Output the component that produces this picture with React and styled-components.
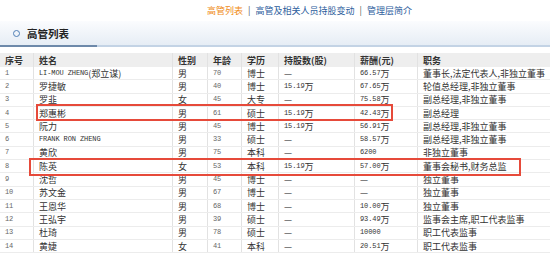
import React from "react";
import styled, { createGlobalStyle } from "styled-components";

const Global = createGlobalStyle`
  html, body { margin: 0; padding: 0; background: #fff; }
  body { font-family: "Noto Sans CJK SC", "Liberation Sans", sans-serif; }
`;

const Page = styled.div`
  width: 550px;
  height: 256px;
  overflow: hidden;
  background: #fff;
`;

const Nav = styled.div`
  height: 21px;
  display: flex;
  align-items: center;
  padding-left: 207px;
  gap: 5px;
  font-size: 9px;
  line-height: 1;
`;

const NavLink = styled.span`
  color: ${(p) => (p.$active ? "#ef8a14" : "#2c5d9c")};
`;

const NavSep = styled.span`
  color: #555;
  font-size: 9px;
`;

const TitleBar = styled.div`
  height: 24px;
  display: flex;
  align-items: center;
  gap: 7px;
  padding-left: 13px;
  background: linear-gradient(#fbfcfe, #e6edf5);
  position: relative;
  border-bottom: 2px solid #c3d3e5;
`;

const TitleAccent = styled.div`
  position: absolute;
  left: 0;
  bottom: -2px;
  width: 97px;
  height: 2px;
  background: #6d89aa;
`;

const Ring = styled.span`
  width: 5px;
  height: 5px;
  border: 1.5px solid #4f7fb6;
  border-radius: 50%;
`;

const Title = styled.span`
  font-size: 10.5px;
  font-weight: 700;
  color: #222;
`;

const TableWrap = styled.div`
  position: relative;
  margin-top: 6px;
`;

const COLS = "33px 139px 35px 34px 37px 76px 63px 133px";

const Row = styled.div`
  display: grid;
  grid-template-columns: ${COLS};
  height: ${(p) => (p.$head ? "14px" : "13.3px")};
  box-sizing: border-box;
  background: ${(p) => (p.$head ? "#eeeeee" : "#fff")};
  border-bottom: ${(p) => (p.$head ? "none" : "1px solid #ececec")};
`;

const Cell = styled.div`
  display: flex;
  align-items: center;
  padding-left: 5px;
  overflow: hidden;
  white-space: nowrap;
  font-size: 9px;
  line-height: 1;
  font-weight: ${(p) => (p.$head ? 700 : 400)};
  color: ${(p) => (p.$muted ? "#666" : "#333")};
  border-left: 1px solid #e2e2e2;
  &:first-child { border-left: none; }
`;

const Latin = styled.span`
  font-family: "Liberation Mono", monospace;
  font-size: 7px;
  letter-spacing: -0.1px;
`;

const Mark = styled.div`
  position: absolute;
  border: 2px solid #e64a3a;
  box-sizing: border-box;
`;

const heads = ["序号", "姓名", "性别", "年龄", "学历", "持股数(股)", "薪酬(元)", "职务"];

const rows = [
  ["1", "LI-MOU ZHENG(郑立谋)", "男", "70", "博士", "—", "66.57万", "董事长,法定代表人,非独立董事"],
  ["2", "罗捷敏", "男", "40", "博士", "15.19万", "67.65万", "轮值总经理,非独立董事"],
  ["3", "罗韭", "女", "45", "大专", "—", "75.58万", "副总经理,非独立董事"],
  ["4", "郑惠彬", "男", "61", "硕士", "15.19万", "42.43万", "副总经理"],
  ["5", "阮力", "男", "45", "博士", "15.19万", "56.91万", "副总经理,非独立董事"],
  ["6", "FRANK RON ZHENG", "男", "33", "硕士", "—", "58.57万", "副总经理,非独立董事"],
  ["7", "黄欣", "男", "75", "本科", "—", "6200", "非独立董事"],
  ["8", "陈英", "女", "53", "本科", "15.19万", "57.00万", "董事会秘书,财务总监"],
  ["9", "沈哲", "男", "45", "博士", "—", "—", "独立董事"],
  ["10", "苏文金", "男", "67", "博士", "—", "—", "独立董事"],
  ["11", "王恩华", "男", "68", "博士", "—", "10.00万", "独立董事"],
  ["12", "王弘宇", "男", "39", "硕士", "—", "93.49万", "监事会主席,职工代表监事"],
  ["13", "杜琦", "男", "78", "硕士", "—", "10000", "职工代表监事"],
  ["14", "黄婕", "女", "41", "本科", "—", "20.51万", "职工代表监事"],
];

const mixed = (text) =>
  text.split(/([A-Za-z0-9.\- ]+)/).map((p, i) =>
    /^[A-Za-z0-9.\- ]+$/.test(p) ? (
      <Latin key={i}>{p}</Latin>
    ) : (
      <React.Fragment key={i}>{p}</React.Fragment>
    )
  );

export default function App() {
  return (
    <Page>
      <Global />
      <Nav>
        <NavLink $active>高管列表</NavLink>
        <NavSep>|</NavSep>
        <NavLink>高管及相关人员持股变动</NavLink>
        <NavSep>|</NavSep>
        <NavLink>管理层简介</NavLink>
      </Nav>
      <TitleBar>
        <Ring />
        <Title>高管列表</Title>
        <TitleAccent />
      </TitleBar>
      <TableWrap>
        <Row $head>
          {heads.map((h) => (
            <Cell $head key={h}>{h}</Cell>
          ))}
        </Row>
        {rows.map((r) => (
          <Row key={r[0]}>
            <Cell $muted>{mixed(r[0])}</Cell>
            <Cell>{mixed(r[1])}</Cell>
            <Cell>{r[2]}</Cell>
            <Cell $muted>{mixed(r[3])}</Cell>
            <Cell>{r[4]}</Cell>
            <Cell>{mixed(r[5])}</Cell>
            <Cell>{mixed(r[6])}</Cell>
            <Cell>{r[7]}</Cell>
          </Row>
        ))}
        <Mark style={{ left: 36, top: 51, width: 357, height: 17 }} />
        <Mark style={{ left: 29, top: 105, width: 492, height: 18 }} />
      </TableWrap>
    </Page>
  );
}
